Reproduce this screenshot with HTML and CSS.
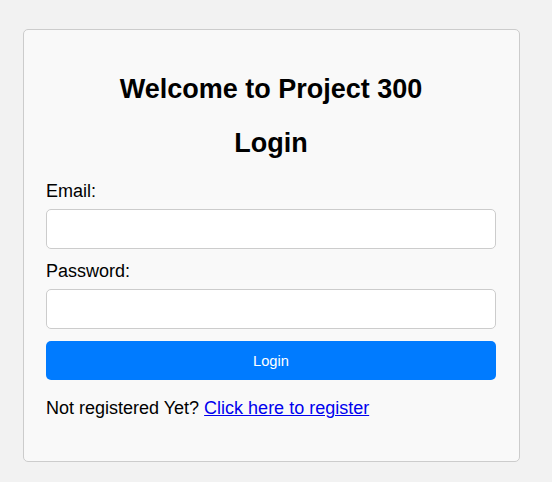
FILE: index.html
```html
<!DOCTYPE html>
<html lang="en">
<head>
<meta charset="utf-8">
<title>Login</title>
<link rel="stylesheet" href="styles.css">
</head>
<body>
<div class="card">
  <h2 class="title">Welcome to Project 300</h2>
  <h2 class="title">Login</h2>
  <form class="form">
    <label class="label" for="email">Email:</label>
    <input class="input" id="email" type="email">
    <label class="label" for="password">Password:</label>
    <input class="input" id="password" type="password">
    <button class="btn" type="button">Login</button>
  </form>
  <p class="footer">Not registered Yet? <a class="link" href="#">Click here to register</a></p>
</div>
</body>
</html>
```
FILE: styles.css
```css
html, body {
  margin: 0;
  padding: 0;
}
body {
  background: #f2f2f2;
  font-family: "Liberation Sans", Arial, sans-serif;
  color: #000;
  padding: 29px 0 0 23px;
}
.card {
  width: 497px;
  box-sizing: border-box;
  background: #f9f9f9;
  border: 1px solid #cccccc;
  border-radius: 5px;
  padding: 22px 23px 22px 22px;
}
.title {
  font-size: 27px;
  font-weight: bold;
  text-align: center;
  margin: 22.4px 0;
}
.form {
  display: flex;
  flex-direction: column;
}
.label {
  display: block;
  font-size: 18px;
  line-height: 20px;
  margin-bottom: 8px;
}
.input {
  display: block;
  box-sizing: border-box;
  width: 100%;
  height: 40px;
  margin: 0 0 12px 0;
  border: 1px solid #cccccc;
  border-radius: 5px;
  background: #fff;
  padding: 8px;
  font-size: 16px;
}
.btn {
  display: block;
  width: 100%;
  height: 39px;
  box-sizing: border-box;
  border: none;
  border-radius: 5px;
  background: #007bff;
  color: #fff;
  font-family: "Liberation Sans", Arial, sans-serif;
  font-size: 14.7px;
  padding: 0;
}
.footer {
  font-size: 18px;
  line-height: 20px;
  margin: 18px 0 21px;
}
.link {
  color: #0000ee;
  text-decoration: underline;
}
```
